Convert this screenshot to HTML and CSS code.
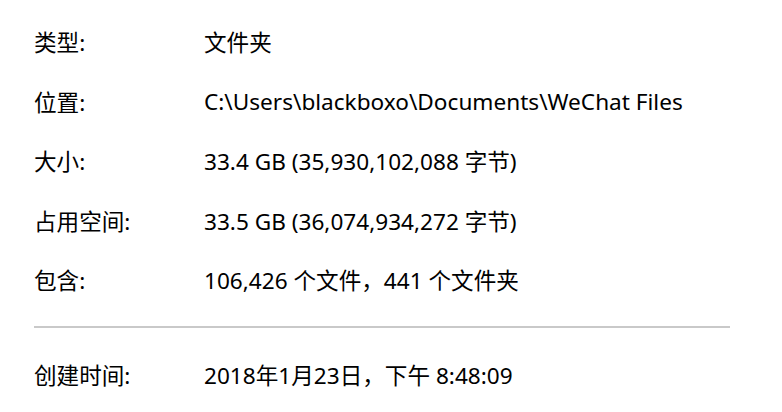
FILE: index.html
```html
<html>
<head>
<meta charset="UTF-8">
<title>WeChat Files 属性</title>
<link rel="stylesheet" href="styles.css">
</head>
<body>
<div class="props">
  <div class="row"><span class="label">类型:</span><span class="value">文件夹</span></div>
  <div class="row"><span class="label">位置:</span><span class="value">C:\Users\blackboxo\Documents\WeChat Files</span></div>
  <div class="row"><span class="label">大小:</span><span class="value">33.4 GB (35,930,102,088 字节)</span></div>
  <div class="row"><span class="label">占用空间:</span><span class="value">33.5 GB (36,074,934,272 字节)</span></div>
  <div class="row"><span class="label">包含:</span><span class="value">106,426 个文件，441 个文件夹</span></div>
  <hr class="sep">
  <div class="row"><span class="label">创建时间:</span><span class="value">2018年1月23日，下午 8:48:09</span></div>
</div>
</body>
</html>
```

FILE: styles.css
```css
body { margin: 0; background: #ffffff; color: #000000;
       font-family: "Noto Sans", "Noto Sans CJK SC", sans-serif; font-size: 22.6px; }

.props { padding: 12px 52px 0 34px; }

.row   { display: flex; align-items: center; height: 59.5px; white-space: nowrap; }
.label { width: 170px; flex: none; }
.value { flex: none; }

.sep   { margin: 16px 0 17px 0; border: none; border-top: 2px solid #c9c9c9; height: 0; }
```
